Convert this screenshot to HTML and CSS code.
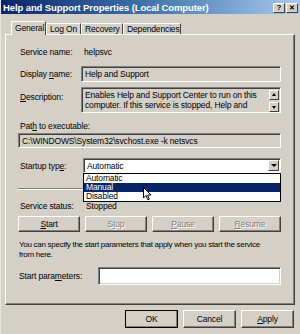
FILE: index.html
```html
<!DOCTYPE html>
<html>
<head>
<meta charset="utf-8">
<link rel="stylesheet" href="styles.css">
</head>
<body>
<div class="window">
  <div class="titlebar">
    <span class="title">Help and Support Properties (Local Computer)</span>
    <span class="tbtns"><span class="tbtn">?</span><span class="tbtn x">✕</span></span>
  </div>
  <div class="tabs">
    <span class="tab sel">General</span>
    <span class="tab">Log On</span>
    <span class="tab">Recovery</span>
    <span class="tab">Dependencies</span>
  </div>
  <div class="panel">
    <div class="row r1"><span class="lbl">Service name:</span><span class="val">helpsvc</span></div>
    <div class="row r2"><span class="lbl">Display <u>n</u>ame:</span><span class="box ro">Help and Support</span></div>
    <div class="row r3"><span class="lbl top"><u>D</u>escription:</span>
      <span class="box ro desc"><span class="dtext">Enables Help and Support Center to run on this computer. If this service is stopped, Help and</span>
        <span class="scroll"><span class="sb up"></span><span class="sb dn"></span></span></span></div>
    <div class="r4">Pat<u>h</u> to executable:</div>
    <div class="row r5 box ro">C:\WINDOWS\System32\svchost.exe -k netsvcs</div>
    <div class="row r6"><span class="lbl">Startup typ<u>e</u>:</span>
      <span class="combo"><span class="ctext">Automatic</span><span class="cbtn"></span>
        <span class="list">
          <span class="item">Automatic</span>
          <span class="item hl">Manual</span>
          <span class="item">Disabled</span>
        </span>
        <svg class="cursor" width="9" height="14" viewBox="0 0 9 14"><path d="M0.5 0.5 L0.5 11 L3 8.5 L4.8 12.8 L6.3 12.2 L4.6 8 L8 8 Z" fill="#fff" stroke="#000" stroke-width="1"/></svg>
      </span></div>
    <div class="sep"></div>
    <div class="row r7"><span class="lbl">Service status:</span><span class="val">Stopped</span></div>
    <div class="row r8 btns">
      <span class="btn"><u>S</u>tart</span>
      <span class="btn dis">S<u>t</u>op</span>
      <span class="btn dis"><u>P</u>ause</span>
      <span class="btn dis"><u>R</u>esume</span>
    </div>
    <div class="r9">You can specify the start parameters that apply when you start the service<br>from here.</div>
    <div class="row r10"><span class="lbl2">Start para<u>m</u>eters:</span><span class="box white"></span></div>
  </div>
  <div class="footer">
    <span class="btn fb def">OK</span>
    <span class="btn fb">Cancel</span>
    <span class="btn fb"><u>A</u>pply</span>
  </div>
</div>
</body>
</html>
```
FILE: styles.css
```css
* { box-sizing: border-box; }
html, body { margin: 0; padding: 0; }
body {
  width: 300px; height: 334px; overflow: hidden;
  font-family: "Liberation Sans", Arial, sans-serif;
  font-size: 8.5px; letter-spacing: -0.15px; color: #000;
}
u { text-decoration: underline; text-underline-offset: 1px; }
.window {
  width: 300px; height: 334px; background: #d4d0c8;
  border-left: 1px solid #e8e6e0;
  display: flex; flex-direction: column;
}
.titlebar {
  height: 14px; flex: none;
  background: linear-gradient(to right, #0a246a 0%, #3a6ea5 45%, #a6caf0 100%);
  display: flex; align-items: center; justify-content: space-between;
  padding: 0 2px 0 2px;
}
.title { color: #fff; font-weight: bold; font-size: 9.5px; letter-spacing: -0.1px; white-space: nowrap; }
.tbtns { display: flex; gap: 1px; margin-top: 1px; }
.tbtn {
  width: 12px; height: 10px; background: #d4d0c8;
  border: 1px solid; border-color: #fff #404040 #404040 #fff;
  font-size: 8px; font-weight: bold; line-height: 8px; text-align: center; letter-spacing: 0;
}
.tbtn.x { font-size: 7px; }
.tabs {
  height: 20px; flex: none; display: flex; align-items: flex-end;
  padding-left: 10px; position: relative; z-index: 1;
}
.tab {
  height: 11px; padding: 0 3px; line-height: 10px; white-space: nowrap;
  border: 1px solid; border-bottom: none; border-color: #fff #404040 #404040 #fff;
  text-align: center;
}
.tab.sel { height: 14px; margin-bottom: -1px; background: #d4d0c8; line-height: 12px; }
.tabs .tab:nth-child(1) { width: 35px; }
.tabs .tab:nth-child(2) { width: 35px; }
.tabs .tab:nth-child(3) { width: 42px; }
.tabs .tab:nth-child(4) { width: 58px; }
.panel {
  margin-left: 4px; width: 290px; height: 271px; flex: none;
  border: 1px solid; border-color: #fff #404040 #404040 #fff;
  box-shadow: inset -1px -1px 0 #808080;
  padding: 0 13px 0 12px;
  display: flex; flex-direction: column;
}
.row { display: flex; align-items: center; flex: none; }
.lbl { width: 63px; flex: none; padding-left: 2px; white-space: nowrap; }
.lbl.top { align-self: flex-start; padding-top: 5px; }
.val { padding-left: 3px; }
.box {
  border: 1px solid; border-color: #808080 #fff #fff #808080;
  box-shadow: inset 1px 1px 0 #404040, inset -1px -1px 0 #d4d0c8;
  flex: 1; align-self: stretch; padding: 0 3px; display: flex; align-items: center;
  white-space: nowrap;
}
.box.ro { background: #d4d0c8; }
.box.white { background: #fff; }
.r1 { margin-top: 11px; height: 12px; }
.r2 { margin-top: 8px; height: 16px; }
.r3 { margin-top: 5px; height: 26px; }
.desc { align-items: flex-start; padding: 2px 1px 0 3px; white-space: normal; }
.dtext { flex: 1; line-height: 10px; }
.scroll { display: flex; flex-direction: column; gap: 2px; width: 10px; }
.sb {
  width: 10px; height: 10px; background: #d4d0c8; position: relative;
  border: 1px solid; border-color: #fff #404040 #404040 #fff;
}
.sb::after {
  content: ""; position: absolute; left: 2px; width: 0; height: 0;
  border-left: 2px solid transparent; border-right: 2px solid transparent;
}
.sb.up::after { top: 2px; border-bottom: 3px solid #000; }
.sb.dn::after { top: 3px; border-top: 3px solid #000; }
.r4 { margin-top: 7px; height: 12px; line-height: 12px; padding-left: 2px; flex: none; }
.r5 { margin-top: 1px; height: 15px; flex: none; }
.r6 { margin-top: 10px; height: 15px; }
.combo {
  position: relative; margin-left: 2px; flex: 1; align-self: stretch;
  background: #fff; border: 1px solid; border-color: #808080 #fff #fff #808080;
  box-shadow: inset 1px 1px 0 #404040;
  display: flex; align-items: center; padding-left: 3px;
}
.ctext { flex: 1; }
.cbtn {
  width: 11px; height: 11px; margin-right: 1px; background: #d4d0c8; position: relative;
  border: 1px solid; border-color: #fff #404040 #404040 #fff;
}
.cbtn::after {
  content: ""; position: absolute; left: 2px; top: 3px;
  border-left: 3px solid transparent; border-right: 3px solid transparent; border-top: 3px solid #000;
}
.list {
  position: absolute; left: -1px; right: -1px; top: 14px; height: 29px;
  background: #fff; border: 1px solid #000; z-index: 5;
  display: flex; flex-direction: column; padding-top: 0;
}
.item { height: 9px; line-height: 9px; padding-left: 2px; }
.item.hl { background: #0a246a; color: #fff; }
.cursor { position: absolute; left: 59px; top: 28px; z-index: 6; }
.sep {
  margin-top: 15px; height: 2px; flex: none;
  border-top: 1px solid #808080; border-bottom: 1px solid #fff;
}
.r7 { margin-top: 10px; height: 12px; }
.r7 .val { padding-left: 5px; }
.btns { margin-top: 4px; height: 16px; gap: 5px; }
.btn {
  background: #d4d0c8; border: 1px solid; border-color: #fff #404040 #404040 #fff;
  box-shadow: inset -1px -1px 0 #808080;
  display: flex; align-items: center; justify-content: center;
}
.btns .btn { width: 62px; height: 16px; }
.btn.dis { color: #808080; text-shadow: 1px 1px 0 #fff; }
.r9 { margin-top: 8px; margin-right: -10px; line-height: 10px; padding-left: 1px; flex: none; font-size: 8px; letter-spacing: -0.28px; white-space: nowrap; }
.r10 { margin-top: 7px; height: 18px; }
.lbl2 { width: 80px; flex: none; padding-left: 1px; }
.footer {
  display: flex; gap: 5px; justify-content: flex-end;
  margin-top: 5px; padding-right: 6px;
}
.fb { width: 53px; height: 18px; }
.fb.def { outline: 1px solid #000; outline-offset: -1px; }
```
